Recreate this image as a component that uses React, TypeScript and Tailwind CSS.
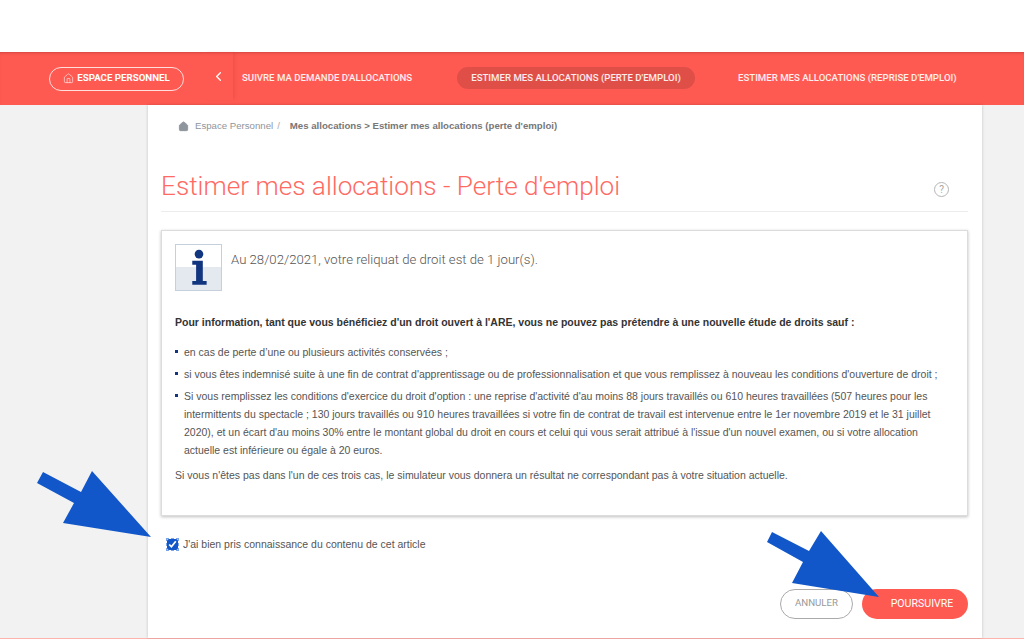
import { ChevronLeft, Home } from 'lucide-react';

function Arrow({ className, points }: { className: string; points: string }) {
  return (
    <svg className={className} viewBox="0 0 120 70" fill="#1257c9">
      <polygon points={points} />
    </svg>
  );
}

function InfoIcon() {
  return (
    <div className="w-[47px] h-[47px] shrink-0 border border-[#c5d0dc] bg-[linear-gradient(#ffffff_0%,#ffffff_50%,#e4e9f0_50%,#e4e9f0_100%)]">
      <svg className="w-full h-full" viewBox="0 0 47 47" fill="#12357f">
        <circle cx="24" cy="9.500" r="4.500" />
        <path d="M17 16.500h11v21h4v4H17v-4h4V20.500h-4z" />
      </svg>
    </div>
  );
}

const bullets = [
  <>en cas de perte d’une ou plusieurs activités conservées ;</>,
  <>si vous êtes indemnisé suite à une fin de contrat d'apprentissage ou de professionnalisation et que vous remplissez à nouveau les conditions d'ouverture de droit ;</>,
  <>Si vous remplissez les conditions d'exercice du droit d'option : une reprise d'activité d'au moins 88 jours travaillés ou 610 heures travaillées (507 heures pour les intermittents du spectacle ; 130 jours travaillés ou 910 heures travaillées si votre fin de contrat de travail est intervenue entre le 1er novembre 2019 et le 31 juillet 2020), et un écart d'au moins 30% entre le montant global du droit en cours et celui qui vous serait attribué à l'issue d'un nouvel examen, ou si votre allocation actuelle est inférieure ou égale à 20 euros.</>,
];

export default function App() {
  return (
    <div className="relative w-[1024px] h-[639px] overflow-hidden bg-white font-['Liberation_Sans',sans-serif]">
      <div className="h-[52px]" />

      {/* NAV */}
      <div className="h-[53px] bg-[#ff5a52] flex items-center shadow-[inset_0_3px_3px_-2px_rgba(150,40,40,0.45)] font-['Roboto',sans-serif] text-white">
        <div className="ml-[49px] w-[135px] h-[24px] rounded-full border border-white/80 flex items-center justify-center gap-[3px] text-[9.700px] font-bold">
          <Home size={11} strokeWidth={1.25} />
          ESPACE PERSONNEL
        </div>
        <div className="ml-[19px] w-[30px] h-[48px] mb-[5px] flex items-center justify-center shadow-[3px_0_3px_-1px_rgba(170,50,50,0.18)]">
          <ChevronLeft size={15} strokeWidth={2} />
        </div>
        <div className="ml-[9px] w-[215px] mb-[1px] text-[9.650px] font-medium text-white/90 whitespace-nowrap">
          SUIVRE MA DEMANDE D'ALLOCATIONS
        </div>
        <div className="w-[238px] h-[22px] mb-[1px] rounded-full bg-[#e04e48] flex items-center justify-center text-[9.650px] font-medium text-white/90 whitespace-nowrap">
          ESTIMER MES ALLOCATIONS (PERTE D'EMPLOI)
        </div>
        <div className="ml-[43px] mb-[1px] text-[9.650px] font-medium text-white/90 whitespace-nowrap">
          ESTIMER MES ALLOCATIONS (REPRISE D'EMPLOI)
        </div>
      </div>

      {/* BODY */}
      <div className="h-[534px] bg-[#f2f2f2] border-b border-[#ffb3ad]">
        <div className="ml-[148px] w-[834px] h-full bg-white shadow-[0_0_3px_rgba(0,0,0,0.2)] pl-[13px]">
          <div className="h-[42px] pl-[17px] flex items-center text-[9.650px]">
            <Home size={11} fill="#8f959c" stroke="#8f959c" className="mr-[6px]" />
            <span className="text-[#8f959c]">Espace Personnel</span>
            <span className="text-[#a8a8a8] ml-[4px] mr-[10px]">/</span>
            <span className="font-bold text-[#777]">Mes allocations &gt; Estimer mes allocations (perte d'emploi)</span>
          </div>

          <div className="h-[65px] pt-[20px] border-b border-[#ececec] w-[807px] flex justify-between font-['Roboto',sans-serif]">
            <h1 className="text-[26.200px] leading-[38px] font-light text-[#ff6a63]">Estimer mes allocations - Perte d'emploi</h1>
            <div className="mt-[15px] mr-[19px] w-[15px] h-[15px] rounded-full border border-[#b5b5b5] flex items-center justify-center text-[10px] text-[#a5a5a5]">?</div>
          </div>

          <div className="mt-[18px] w-[807px] h-[286px] border border-[#dcdcdc] shadow-[0_1px_3px_rgba(0,0,0,0.25)] px-[13px] pt-[13px]">
            <div className="flex items-start">
              <InfoIcon />
              <p className="ml-[9px] mt-[7px] text-[13.150px] leading-[18px] font-light font-['Roboto',sans-serif] text-[#555]">
                Au 28/02/2021, votre reliquat de droit est de 1 jour(s).
              </p>
            </div>
            <p className="mt-[23px] text-[10.500px] leading-[16px] font-bold text-[#333]">
              Pour information, tant que vous bénéficiez d'un droit ouvert à l'ARE, vous ne pouvez pas prétendre à une nouvelle étude de droits sauf :
            </p>
            <ul className="mt-[13px] flex flex-col gap-[4px] text-[10.500px] leading-[18px] text-[#555]">
              {bullets.map((b, i) => (
                <li key={i} className="flex">
                  <span className="w-[3px] h-[3px] mt-[7px] mr-[6px] shrink-0 bg-[#12357f]" />
                  <span>{b}</span>
                </li>
              ))}
            </ul>
            <p className="mt-[7px] text-[10.500px] leading-[18px] text-[#555]">
              Si vous n'êtes pas dans l'un de ces trois cas, le simulateur vous donnera un résultat ne correspondant pas à votre situation actuelle.
            </p>
          </div>

          <label className="mt-[21px] ml-[6px] flex items-center gap-[5px] text-[10.500px] text-[#555]">
            <input type="checkbox" defaultChecked className="w-[11px] h-[11px] accent-[#1257c9] outline-1 outline-dashed outline-[#7aa5e8]" />
            J'ai bien pris connaissance du contenu de cet article
          </label>

          <div className="mt-[36px] w-[807px] flex justify-end gap-[9px] font-['Roboto',sans-serif]">
            <button className="w-[73px] h-[30px] rounded-full border border-[#aaa] text-[#999] text-[9.700px]">ANNULER</button>
            <button className="w-[106px] h-[30px] pl-[14px] rounded-full bg-[#ff5a52] text-white text-[10.600px]">POURSUIVRE</button>
          </div>
        </div>
      </div>

      {/* ARROWS */}
      <Arrow className="absolute left-[37px] top-[471px] w-[120px] h-[70px]" points="6,1 0,12 37,32 26,52 114,66 55,0 44,21" />
      <Arrow className="absolute left-[767px] top-[531px] w-[120px] h-[70px]" points="5,1 0,11 36,31 25,52 112,66 54,0 42,20" />
    </div>
  );
}
